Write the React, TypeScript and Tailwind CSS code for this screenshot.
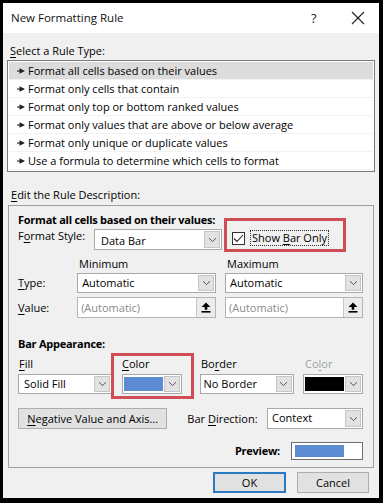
import React from "react";

const FONT = "font-['Open_Sans','Noto_Sans',sans-serif]";

const RULES = [
  "Format all cells based on their values",
  "Format only cells that contain",
  "Format only top or bottom ranked values",
  "Format only values that are above or below average",
  "Format only unique or duplicate values",
  "Use a formula to determine which cells to format",
];

function Bullet() {
  return (
    <svg width="8" height="6" viewBox="0 0 8 6" className="flex-none">
      <rect x="0" y="2.5" width="4" height="1.1" fill="#222" />
      <polygon points="2.5,0.3 8,3 2.5,5.7" fill="#222" />
    </svg>
  );
}

function Chevron() {
  return (
    <svg width="9" height="6" viewBox="0 0 9 6">
      <path d="M1 1.2 L4.5 4.6 L8 1.2" stroke="#555" strokeWidth="1" fill="none" />
    </svg>
  );
}

function UploadIcon() {
  return (
    <svg width="10" height="11" viewBox="0 0 10 11">
      <polygon points="5,0.5 9.5,5 6.3,5 6.3,7.8 3.7,7.8 3.7,5 0.5,5" fill="#000" />
      <rect x="0.5" y="9" width="9" height="1.6" fill="#000" />
    </svg>
  );
}

function U({ children }: { children: React.ReactNode }) {
  return <span className="underline underline-offset-[2px] decoration-[1px]">{children}</span>;
}

function Select({
  width,
  height = "h-[20px]",
  children,
}: {
  width: string;
  height?: string;
  children: React.ReactNode;
}) {
  return (
    <div className={`flex ${width} ${height} flex-none items-stretch border border-[#a8a8a8] bg-white`}>
      <div className="flex min-w-0 flex-1 items-center overflow-hidden">{children}</div>
      <div className="m-[1px] flex w-[16px] items-center justify-center border border-[#c6c6c6] bg-[#e2e2e2]">
        <Chevron />
      </div>
    </div>
  );
}

function ValueField({ width }: { width: string }) {
  return (
    <div className={`flex ${width} h-[21px] flex-none items-stretch border border-[#b4b4b4] bg-white`}>
      <div className="flex flex-1 items-center pl-[3px] text-[#8a8a8a]">(Automatic)</div>
      <div className="flex w-[19px] items-center justify-center border-l border-[#c6c6c6] bg-[#ececec]">
        <UploadIcon />
      </div>
    </div>
  );
}

export default function App() {
  return (
    <div className={`h-[503px] w-[383px] bg-black pb-[5px] pl-[3px] pr-[4px] pt-[3px] ${FONT} text-[11px] leading-[14px] text-black`}>
      <div className="flex h-full flex-col bg-[#f0f0f0]">
        {/* title bar */}
        <div className="flex h-[30px] flex-none items-center bg-white pl-[8px]">
          <span className="flex-1 text-[11.5px] text-[#111]">New Formatting Rule</span>
          <span className="w-[40px] text-[13px] text-[#222]">?</span>
          <svg width="14" height="14" viewBox="0 0 14 14" className="mr-[14px]">
            <path d="M1 1 L13 13 M13 1 L1 13" stroke="#222" strokeWidth="1.1" />
          </svg>
        </div>

        <div className="flex flex-1 flex-col px-[4px]">
          <div className="mt-[11px] pl-[3px]">
            <U>S</U>elect a Rule Type:
          </div>

          <div className="mt-[2px] h-[112px] border border-[#7a7a7a] bg-white p-[1px]">
            {RULES.map((r, i) => (
              <div
                key={r}
                className={`flex h-[18px] items-center gap-[3px] border-b border-[#f2f2f2] pl-[8px] ${i === 0 ? "bg-[#dcdcdc]" : ""}`}
              >
                <Bullet />
                <span>{r}</span>
              </div>
            ))}
          </div>

          <div className="mt-[16px] pl-[4px]">
            <U>E</U>dit the Rule Description:
          </div>

          {/* group box */}
          <div className="relative ml-[1px] mr-[1px] mt-[3px] flex h-[263px] flex-col border border-[#a0a0a0] pl-[9px] pr-[10px] pt-[7px]">
            <div className="font-bold tracking-[-0.25px]">Format all cells based on their values:</div>

            <div className="mt-[2px] flex h-[21px] items-start">
              <div className="w-[76px]">
                F<U>o</U>rmat Style:
              </div>
              <Select width="w-[128px]" height="h-[21px]">
                <span className="pl-[6px] pt-[2px]">Data Bar</span>
              </Select>
              <div className="ml-[10px] mt-[1px] flex items-center">
                <div className="flex h-[13px] w-[13px] items-center justify-center border border-[#333] bg-white">
                  <svg width="11" height="9" viewBox="0 0 11 9">
                    <path d="M1 4.5 L4 7.5 L10 1" stroke="#222" strokeWidth="1.1" fill="none" />
                  </svg>
                </div>
                <span className="ml-[5px] border border-dotted border-[#333] px-[1px]">
                  Show <U>B</U>ar Only
                </span>
              </div>
            </div>

            {/* red annotation boxes */}
            <div className="pointer-events-none absolute left-[215px] top-[12px] h-[34px] w-[122px] border-[3px] border-[#cf4d55]" />
            <div className="pointer-events-none absolute left-[102px] top-[147px] h-[46px] w-[83px] border-[3px] border-[#cf4d55]" />

            <div className="mt-[7px] flex h-[14px]">
              <div className="w-[61px]" />
              <div className="w-[148px]">Minimum</div>
              <div>Maximum</div>
            </div>

            <div className="mt-[2px] flex h-[20px] items-center">
              <div className="w-[60px]">
                <U>T</U>ype:
              </div>
              <Select width="w-[139px]">
                <span className="pl-[4px]">Automatic</span>
              </Select>
              <div className="w-[9px]" />
              <Select width="w-[138px]">
                <span className="pl-[4px]">Automatic</span>
              </Select>
            </div>

            <div className="mt-[4px] flex h-[21px] items-center">
              <div className="w-[60px]">
                <U>V</U>alue:
              </div>
              <ValueField width="w-[139px]" />
              <div className="w-[9px]" />
              <ValueField width="w-[138px]" />
            </div>

            <div className="mt-[19px] font-bold tracking-[-0.25px]">Bar Appearance:</div>

            <div className="mt-[6px] flex h-[14px]">
              <div className="w-[104px] pl-[1px]">
                <U>F</U>ill
              </div>
              <div className="w-[79px]">
                <U>C</U>olor
              </div>
              <div className="w-[104px]">
                Bo<U>r</U>der
              </div>
              <div className="text-[#a0a0a0]">
                Co<U>l</U>or
              </div>
            </div>

            <div className="mt-[3px] flex h-[20px] items-center">
              <Select width="w-[94px]">
                <span className="pl-[5px]">Solid Fill</span>
              </Select>
              <div className="w-[11px]" />
              <Select width="w-[60px]">
                <div className="ml-[1px] h-[14px] w-full bg-[#5b8bd0]" />
              </Select>
              <div className="w-[18px]" />
              <Select width="w-[94px]">
                <span className="pl-[3px]">No Border</span>
              </Select>
              <div className="w-[10px]" />
              <Select width="w-[60px]">
                <div className="ml-[1px] h-[14px] w-full bg-black" />
              </Select>
            </div>

            <div className="mt-[14px] flex h-[21px] items-center">
              <div className="flex h-[21px] w-[150px] items-center justify-center border border-[#adadad] bg-[#e1e1e1]">
                <U>N</U>egative Value and Axis...
              </div>
              <div className="w-[20px]" />
              <div className="w-[80px]">
                Bar <U>D</U>irection:
              </div>
              <Select width="w-[96px]" height="h-[21px]">
                <span className="pl-[4px] pb-[2px]">Context</span>
              </Select>
            </div>

            <div className="mt-[13px] flex h-[18px] items-center justify-end">
              <span className="mr-[11px] font-bold tracking-[-0.25px]">Preview:</span>
              <div className="flex h-[18px] w-[72px] items-center border border-[#6e6e6e] bg-white px-[3px]">
                <div className="h-[12px] w-[49px] bg-[#5b8bd0]" />
              </div>
            </div>
          </div>

          <div className="mt-[4px] flex justify-end gap-[11px] pr-[6px]">
            <div className="flex h-[21px] w-[73px] items-center justify-center border-2 border-[#2a7ac2] bg-[#e1e1e1]">
              OK
            </div>
            <div className="flex h-[21px] w-[72px] items-center justify-center border border-[#adadad] bg-[#e1e1e1]">
              Cancel
            </div>
          </div>
        </div>
      </div>
    </div>
  );
}
